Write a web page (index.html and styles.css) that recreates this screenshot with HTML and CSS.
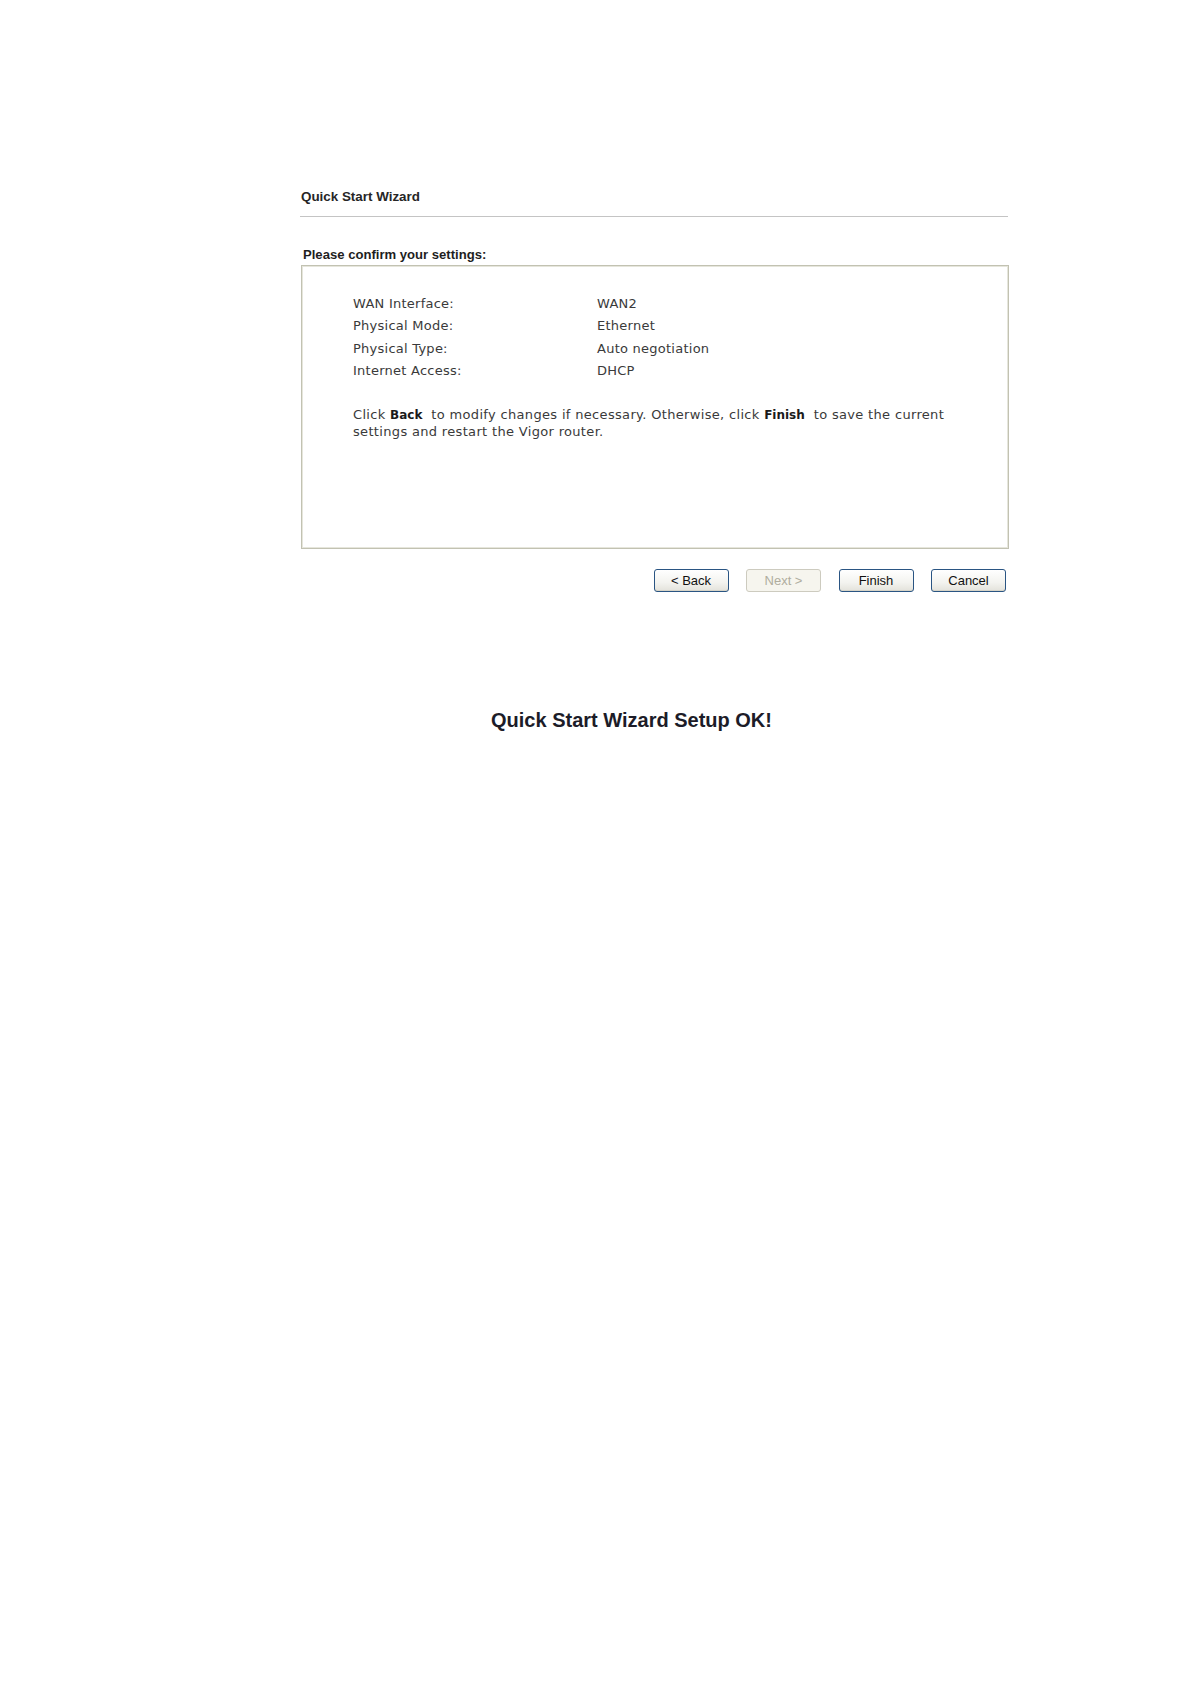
FILE: index.html
```html
<!DOCTYPE html>
<html>
<head>
<meta charset="utf-8">
<title>Quick Start Wizard</title>
<link rel="stylesheet" href="styles.css">
</head>
<body>
<div class="page">
  <div class="wizard">
    <div class="wizard-title">Quick Start Wizard</div>
    <div class="rule"></div>
    <div class="section-title">Please confirm your settings:</div>
    <div class="panel">
      <div class="settings">
        <div class="label">WAN Interface:</div><div class="value">WAN2</div>
        <div class="label">Physical Mode:</div><div class="value">Ethernet</div>
        <div class="label">Physical Type:</div><div class="value">Auto negotiation</div>
        <div class="label">Internet Access:</div><div class="value">DHCP</div>
      </div>
      <p class="note">Click <b>Back</b>&nbsp; to modify changes if necessary. Otherwise, click <b>Finish</b>&nbsp; to save the current<br>settings and restart the Vigor router.</p>
    </div>
    <div class="buttons">
      <button class="btn">&lt; Back</button>
      <button class="btn" disabled>Next &gt;</button>
      <button class="btn">Finish</button>
      <button class="btn">Cancel</button>
    </div>
  </div>
  <div class="done">Quick Start Wizard Setup OK!</div>
</div>
</body>
</html>
```

FILE: styles.css
```css
html, body {
  margin: 0;
  padding: 0;
  background: #ffffff;
}

.page {
  padding-top: 189px;
}

.wizard {
  margin-left: 300px;
  width: 709px;
}

.wizard-title {
  font-family: "Liberation Sans", Arial, sans-serif;
  font-weight: bold;
  font-size: 13.4px;
  line-height: 16px;
  color: #262626;
  padding-left: 1px;
}

.rule {
  margin-top: 11px;
  height: 1px;
  background: #c4c4c4;
  width: 708px;
}

.section-title {
  margin-top: 30px;
  padding-left: 3px;
  font-family: "Liberation Sans", Arial, sans-serif;
  font-weight: bold;
  font-size: 13.1px;
  line-height: 16px;
  color: #1e1e1e;
}

.panel {
  margin-top: 2px;
  margin-left: 1px;
  box-sizing: border-box;
  height: 284px;
  width: 708px;
  border: 1px solid #c2c2b2;
  box-shadow: inset 0 0 0 1px #e6e6dc;
  padding: 27px 30px 0 51px;
}

.settings {
  display: grid;
  grid-template-columns: 244px auto;
  font-family: "DejaVu Sans", Verdana, sans-serif;
  font-size: 13px;
  letter-spacing: 0.25px;
  line-height: 22.3px;
  color: #3a3a3a;
}

.note {
  margin: 25px 0 0 0;
  font-family: "DejaVu Sans", Verdana, sans-serif;
  font-size: 13px;
  letter-spacing: 0.33px;
  line-height: 16.5px;
  color: #3a3a3a;
  white-space: nowrap;
}

.note b {
  color: #1a1a1a;
  font-weight: bold;
  font-size: 12px;
  letter-spacing: 0;
}

.buttons {
  margin-top: 20px;
  display: flex;
  justify-content: flex-end;
  gap: 17.5px;
  padding-right: 3px;
}

.btn {
  box-sizing: border-box;
  width: 75px;
  height: 23px;
  padding: 0;
  font-family: "Liberation Sans", Arial, sans-serif;
  font-size: 13px;
  color: #111111;
  border: 1px solid #2a5583;
  border-radius: 3px;
  background: linear-gradient(#ffffff, #f3f3ef 60%, #e3e2db);
  box-shadow: inset 0 -1px 0 #d6d4c8;
}

.btn:disabled {
  color: #b0ad9e;
  border-color: #cdcbbf;
  background: #f6f5ee;
  box-shadow: none;
}

.done {
  margin-top: 116px;
  margin-left: 491px;
  font-family: "Liberation Sans", Arial, sans-serif;
  font-weight: bold;
  font-size: 20px;
  line-height: 24px;
  color: #1c1c28;
}
```
